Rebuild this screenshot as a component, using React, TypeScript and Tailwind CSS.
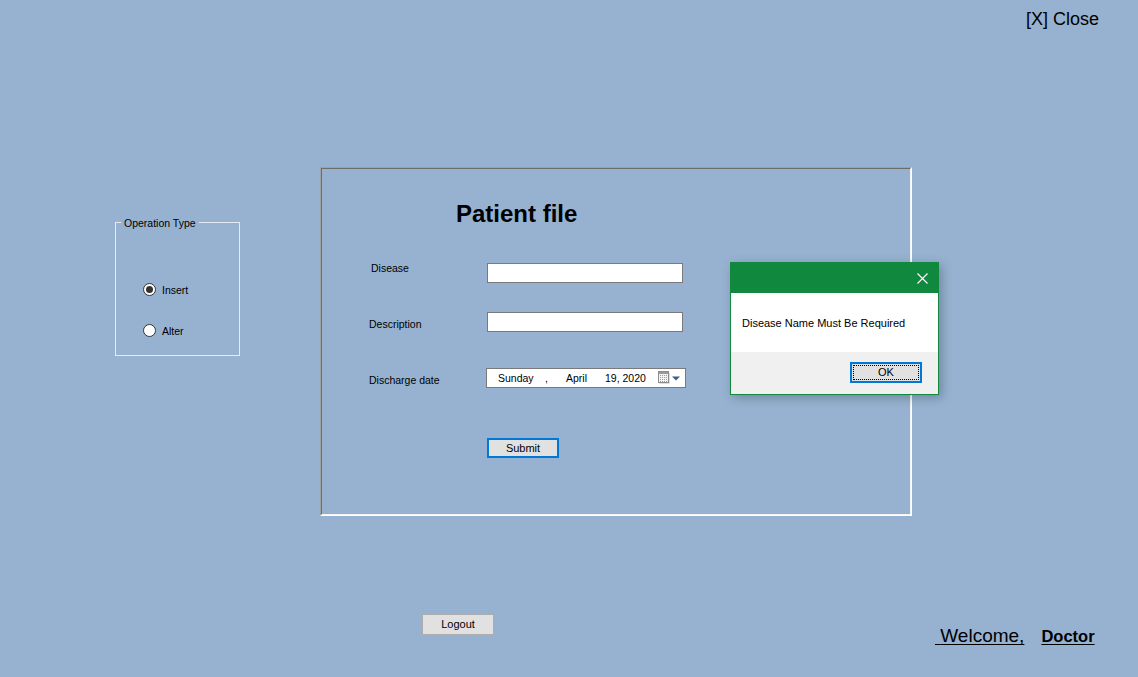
import React from "react";

const ui = { fontFamily: '"Liberation Sans", Arial, sans-serif' };

function Radio({ checked, label }: { checked?: boolean; label: string }) {
  return (
    <div className="flex items-center h-[13px]">
      <span className="w-[13px] h-[13px] rounded-full border border-[#333333] bg-white flex items-center justify-center">
        {checked && <span className="w-[7px] h-[7px] rounded-full bg-[#333333]" />}
      </span>
      <span className="ml-[6px] text-[10.5px] leading-[12px] text-black">{label}</span>
    </div>
  );
}

function CalendarIcon() {
  return (
    <svg width="24" height="14" viewBox="0 0 24 14">
      <rect x="1.5" y="1.5" width="10" height="11" fill="#bdbdbd" />
      <rect x="0.5" y="0.5" width="10" height="11" fill="#f4f4f4" stroke="#8c8c8c" />
      <rect x="1" y="1" width="9" height="2" fill="#9a9a9a" />
      {[2.5, 4.5, 6.5, 8.5].map((x) =>
        [4.5, 6.5, 8.5, 10.5].map((y) => (
          <rect key={x + "-" + y} x={x - 0.5} y={y - 0.5} width="1" height="1" fill="#9c9c9c" />
        ))
      )}
      <path d="M14 5.5 L22 5.5 L18 9.5 Z" fill="#3d5f86" />
    </svg>
  );
}

export default function App() {
  return (
    <div className="relative w-[1138px] h-[677px] overflow-hidden bg-[#97b2d1] text-black" style={ui}>
      {/* Close */}
      <div className="absolute left-[1026px] top-[10px] text-[18px] leading-[18px]">[X] Close</div>

      {/* Operation type group box */}
      <div className="absolute left-[115px] top-[222px] w-[125px] h-[134px] border border-[#e4eaf1]">
        <span className="absolute left-[5px] top-[-6px] px-[3px] bg-[#97b2d1] text-[10.5px] leading-[12px]">
          Operation Type
        </span>
        <div className="flex flex-col pl-[27px] pt-[60px] gap-[28px]">
          <Radio checked label="Insert" />
          <Radio label="Alter" />
        </div>
      </div>

      {/* Patient panel */}
      <div className="absolute left-[320px] top-[167px] w-[592px] h-[349px] border border-t-[#a0a0a0] border-l-[#a0a0a0] border-r-white border-b-white">
        <div className="w-full h-full border border-t-[#6d6d6d] border-l-[#6d6d6d] border-r-[#f4f4f4] border-b-[#f4f4f4] flex flex-col">
          <div className="mt-[33px] ml-[134px] text-[24px] leading-[24px] font-bold">Patient file</div>

          <div className="mt-[37px] flex items-start h-[20px]">
            <div className="w-[165px] pl-[49px] text-[10.5px] leading-[12px] -mt-[1px]">Disease</div>
            <div className="w-[196px] h-[20px] bg-white border border-[#7a7a7a]" />
          </div>

          <div className="mt-[29px] flex items-start h-[20px]">
            <div className="w-[165px] pl-[47px] text-[10.5px] leading-[12px] mt-[6px]">Description</div>
            <div className="w-[196px] h-[20px] bg-white border border-[#7a7a7a]" />
          </div>

          <div className="mt-[36px] flex items-start h-[20px]">
            <div className="w-[164px] pl-[47px] text-[10.5px] leading-[12px] mt-[6px]">Discharge date</div>
            <div className="w-[200px] h-[20px] bg-white border border-[#7a7a7a] flex items-center pl-[11px] text-[10.5px] leading-[12px]">
              <span className="w-[47px]">Sunday</span>
              <span className="w-[21px]">,</span>
              <span className="w-[39px]">April</span>
              <span className="w-[53px]">19, 2020</span>
              <CalendarIcon />
            </div>
          </div>

          <div className="mt-[50px] ml-[165px]">
            <button className="w-[72px] h-[20px] bg-[#e1e1e1] border-2 border-[#0078d7] text-[11px] leading-[14px] flex items-center justify-center">
              Submit
            </button>
          </div>
        </div>
      </div>

      {/* Message box */}
      <div className="absolute left-[730px] top-[262px] w-[209px] border border-[#10893e] shadow-[3px_3px_10px_rgba(0,0,0,0.25)] flex flex-col">
        <div className="h-[30px] bg-[#10893e] flex items-center justify-end pr-[10px]">
          <svg width="11" height="11" viewBox="0 0 11 11">
            <path d="M0.5 0.5 L10.5 10.5 M10.5 0.5 L0.5 10.5" stroke="#ffffff" strokeWidth="1.1" />
          </svg>
        </div>
        <div className="h-[59px] bg-white pl-[11px] pt-[24px] text-[11px] leading-[13px] text-[#000000]">
          Disease Name Must Be Required
        </div>
        <div className="h-[42px] bg-[#f0f0f0] flex justify-end items-start pt-[10px] pr-[16px]">
          <button className="w-[72px] h-[21px] bg-[#e1e1e1] border-2 border-[#0078d7] p-[1px]">
            <span className="w-full h-full border border-dotted border-black flex items-center justify-center text-[11px] leading-[13px]">
              OK
            </span>
          </button>
        </div>
      </div>

      {/* Logout */}
      <button className="absolute left-[422px] top-[614px] w-[72px] h-[21px] bg-[#e1e1e1] border border-[#adadad] text-[11px] leading-[13px] flex items-center justify-center">
        Logout
      </button>

      {/* Welcome */}
      <div className="absolute left-[935px] top-[626px] flex items-baseline">
        <span className="text-[19px] leading-[19px] underline underline-offset-2">{"\u00a0"}Welcome,</span>
        <span className="ml-[17px] text-[16.5px] leading-[16px] font-bold underline underline-offset-2">Doctor</span>
      </div>
    </div>
  );
}
